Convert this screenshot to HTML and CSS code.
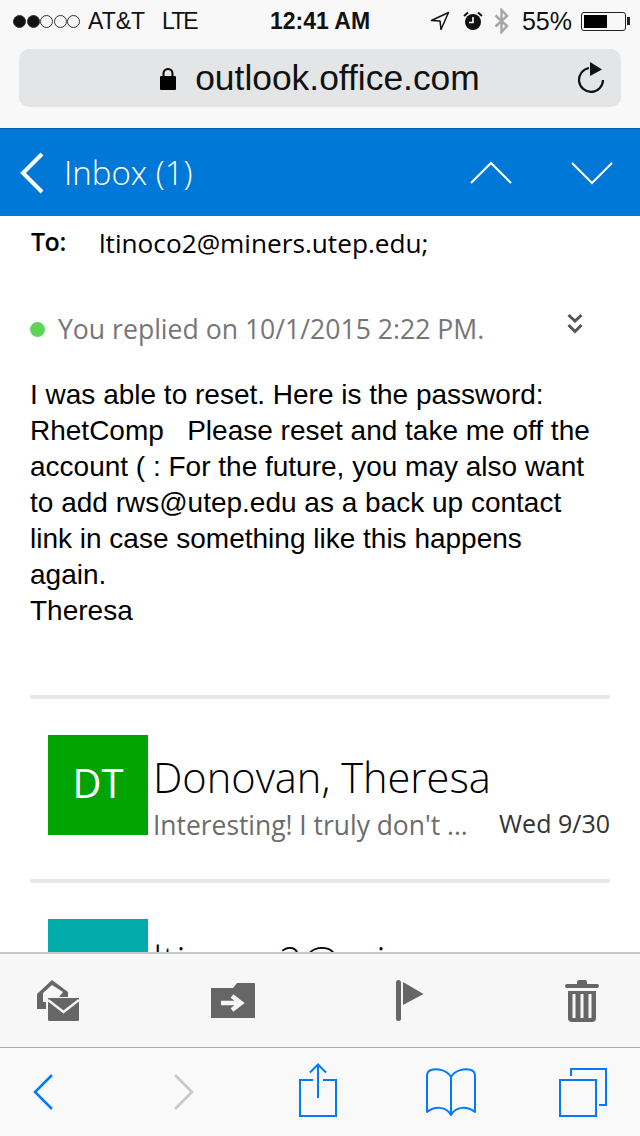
FILE: index.html
```html
<!DOCTYPE html>
<html lang="en">
<head>
    <meta charset="utf-8">
    <title>Inbox</title>
    <link rel="stylesheet" href="styles.css">
</head>
<body>
    <div class="phone">
        <!-- safari chrome -->
        <div class="top-bar">
            <div class="status">
                <div class="status-left">
                    <span class="signal">
                        <i class="dot on"></i><i class="dot on"></i><i class="dot"></i><i class="dot"></i><i class="dot"></i>
                    </span>
                    <span class="carrier">AT&amp;T</span>
                    <span class="network">LTE</span>
                </div>
                <div class="clock">12:41 AM</div>
                <div class="status-right">
                    <svg class="ic-loc" width="20" height="20" viewBox="0 0 20 20"><path d="M1.5 9.5 L18.5 1.5 L11 18.5 L10 10 Z" fill="none" stroke="#111" stroke-width="1.5" stroke-linejoin="round"/></svg>
                    <svg class="ic-alarm" width="20" height="20" viewBox="0 0 20 20"><circle cx="10" cy="11" r="8" fill="#111"/><path d="M10 6 V11.5 H6" fill="none" stroke="#fff" stroke-width="1.6"/><path d="M1 5 L5 1.5 M19 5 L15 1.5" stroke="#111" stroke-width="2"/></svg>
                    <svg class="ic-bt" width="15" height="26" viewBox="0 0 15 26"><path d="M1.500 7.500 L13 18 L7.500 24 V2 L13 8 L1.500 18.500" fill="none" stroke="#a6a6a6" stroke-width="2.400"/></svg>
                    <span class="percent">55%</span>
                    <span class="battery"><span class="battery-level"></span></span>
                    <span class="battery-tip"></span>
                </div>
            </div>
            <div class="url-bar">
                <svg class="ic-lock" width="16" height="23" viewBox="0 0 16 23"><path d="M3.5 10 V6.5 a4.5 4.5 0 0 1 9 0 V10" fill="none" stroke="#000" stroke-width="2"/><rect x="0" y="9" width="16" height="14" rx="1" fill="#000"/></svg>
                <span class="url">outlook.office.com</span>
                <svg class="ic-reload" width="28" height="31" viewBox="0 0 28 31"><path d="M12 6 A12 12 0 1 0 26 18" fill="none" stroke="#111" stroke-width="2.200"/><path d="M13 0 L25 7.500 L13 14 Z" fill="#111"/></svg>
            </div>
        </div>

        <!-- outlook header -->
        <div class="mail-header">
            <svg class="ic-back" width="26" height="42" viewBox="0 0 26 42"><path d="M23 2 L4 21 L23 40" fill="none" stroke="#fff" stroke-width="4"/></svg>
            <span class="inbox-title">Inbox (1)</span>
            <svg class="ic-up" width="42" height="24" viewBox="0 0 42 24"><path d="M1 22 L21 2 L41 22" fill="none" stroke="#fff" stroke-width="2"/></svg>
            <svg class="ic-down" width="42" height="24" viewBox="0 0 42 24"><path d="M1 2 L21 22 L41 2" fill="none" stroke="#fff" stroke-width="2"/></svg>
        </div>

        <div class="content">
            <div class="to-row">
                <span class="to-label">To:</span>
                <span class="to-addr">ltinoco2@miners.utep.edu;</span>
            </div>
            <div class="reply-row">
                <i class="green-dot"></i>
                <span class="reply-text">You replied on 10/1/2015 2:22 PM.</span>
                <svg class="ic-more" width="16" height="22" viewBox="0 0 16 22"><path d="M1.5 2 L8 8 L14.5 2 M1.5 12 L8 18.500 L14.5 12" fill="none" stroke="#555" stroke-width="3"/></svg>
            </div>
            <div class="message">I was able to reset. Here is the password:<br>RhetComp &nbsp; Please reset and take me off the<br>account ( : For the future, you may also want<br>to add rws@utep.edu as a back up contact<br>link in case something like this happens<br>again.<br>Theresa</div>

            <div class="thread">
                <div class="avatar green">DT</div>
                <div class="thread-main">
                    <div class="sender">Donovan, Theresa</div>
                    <div class="thread-sub">
                        <span class="preview">Interesting! I truly don't ...</span>
                        <span class="date">Wed 9/30</span>
                    </div>
                </div>
            </div>
            <div class="thread last">
                <div class="avatar teal"></div>
                <div class="thread-main">
                    <div class="sender">ltinoco2@miners</div>
                </div>
            </div>
        </div>

        <div class="mail-tools">
            <svg class="mt-read" width="42" height="42" viewBox="0 0 42 42"><path d="M0 14 L15 0 L31 12 V17 H22 L26 12 L15 5 L6 13 V22 H9 V29 H0 Z" fill="#666"/><path d="M11 18 H42 V39.500 a1.500 1.500 0 0 1 -1.500 1.500 H12.500 a1.500 1.500 0 0 1 -1.500 -1.500 Z" fill="#666"/><path d="M11 20 L26.500 32 L42 20" fill="none" stroke="#f7f7f7" stroke-width="2.500"/></svg>
            <svg class="mt-move" width="44" height="35" viewBox="0 0 44 35"><path d="M0 5 H22 L26 0 H43 a1 1 0 0 1 1 1 V35 H0 Z" fill="#666"/><path d="M10 20 H28 M21 13 L30 20 L21 27" fill="none" stroke="#f7f7f7" stroke-width="4.500"/></svg>
            <svg class="mt-flag" width="28" height="41" viewBox="0 0 28 41"><rect x="0" y="0" width="5" height="41" rx="2.500" fill="#666"/><path d="M7 2 L27.500 14 L7 25 Z" fill="#666"/></svg>
            <svg class="mt-trash" width="34" height="44" viewBox="0 0 34 44"><path d="M12 3 a2 2 0 0 1 2 -2 h6 a2 2 0 0 1 2 2 V5 H32 a2 2 0 0 1 0 4 H2 a2 2 0 0 1 0 -4 H12 Z" fill="#666"/><path d="M3 12 H31 V39 a4 4 0 0 1 -4 4 H7 a4 4 0 0 1 -4 -4 Z" fill="#666"/><path d="M9 15 V39 M17 15 V39 M25 15 V39" stroke="#f7f7f7" stroke-width="3"/></svg>
        </div>

        <div class="browser-tools">
            <svg class="bt-back" width="22" height="38" viewBox="0 0 22 38"><path d="M20 2 L3 19 L20 36" fill="none" stroke="#007aff" stroke-width="2.500"/></svg>
            <svg class="bt-fwd" width="22" height="38" viewBox="0 0 22 38"><path d="M2 2 L19 19 L2 36" fill="none" stroke="#c7c7c7" stroke-width="2.500"/></svg>
            <svg class="bt-share" width="40" height="54" viewBox="0 0 40 54"><path d="M15 17 H2 V53 H38 V17 H25" fill="none" stroke="#007aff" stroke-width="2"/><path d="M20 35 V2 M12 9.500 L20 1.500 L28 9.500" fill="none" stroke="#007aff" stroke-width="2"/></svg>
            <svg class="bt-book" width="52" height="50" viewBox="0 0 52 50"><path d="M26 10 C22 3 12 1 6 3 C3 4 2 6 2 9 V45 C10 39 21 39 26 48 C31 39 42 39 50 45 V9 C50 6 49 4 46 3 C40 1 30 3 26 10 V48" fill="none" stroke="#007aff" stroke-width="2" stroke-linejoin="round"/></svg>
            <svg class="bt-tabs" width="50" height="50" viewBox="0 0 50 50"><rect x="2" y="13" width="36" height="36" fill="none" stroke="#007aff" stroke-width="2"/><path d="M13 9 V2 H48 V38 H41" fill="none" stroke="#007aff" stroke-width="2"/></svg>
        </div>
    </div>
</body>
</html>
```

FILE: styles.css
```css
html,
body {
    margin: 0;
    padding: 0;
    background: #fff;
}

.phone {
    width: 640px;
    height: 1136px;
    overflow: hidden;
    display: flex;
    flex-direction: column;
    font-family: "Liberation Sans", Arial, sans-serif;
    color: #000;
}

/* safari chrome */
.top-bar {
    height: 129px;
    flex: none;
    background: #f8f8f8;
    border-bottom: 1px solid #0a5ca8;
    box-sizing: border-box;
    padding: 0 19px;
}

.status {
    height: 49px;
    display: flex;
    align-items: center;
    justify-content: space-between;
    margin: 0 -9px 0 -6px;
    padding-bottom: 7px;
    box-sizing: border-box;
    font-size: 24px;
    color: #111;
}

.status-left,
.status-right {
    display: flex;
    align-items: center;
    width: 235px;
}

.status-right {
    justify-content: flex-end;
}

.signal {
    display: flex;
    gap: 0.500px;
    margin-right: 8px;
}

.dot {
    width: 13px;
    height: 13px;
    border: 1px solid #333;
    border-radius: 50%;
    box-sizing: border-box;
}

.dot.on {
    background: #111;
}

.carrier {
    font-size: 23px;
}

.network {
    margin-left: 17px;
    font-size: 23px;
    letter-spacing: -2px;
}

.clock {
    font-weight: 700;
    font-size: 23px;
    margin-right: 3px;
}

.ic-loc {
    margin-right: 13px;
}

.ic-alarm {
    margin-right: 11px;
}

.ic-bt {
    margin-right: 13px;
}

.percent {
    font-size: 25px;
    margin-right: 9px;
}

.battery {
    width: 45px;
    height: 19px;
    border: 1px solid #222;
    border-radius: 3px;
    box-sizing: border-box;
    padding: 2px;
    display: block;
}

.battery-level {
    display: block;
    width: 23px;
    height: 100%;
    background: #000;
}

.battery-tip {
    width: 3px;
    height: 8px;
    background: #222;
    margin-left: 1px;
}

.url-bar {
    height: 58px;
    background: #e4e5e7;
    border-radius: 10px;
    display: flex;
    align-items: center;
    justify-content: center;
    position: relative;
    font-size: 35.400px;
    color: #111;
}

.ic-lock {
    margin-right: 19px;
}

.ic-reload {
    position: absolute;
    right: 16px;
    top: 13px;
}

/* outlook header */
.mail-header {
    height: 87px;
    flex: none;
    background: #0078d7;
    display: flex;
    align-items: center;
    padding: 0 27px 0 19px;
    color: #fff;
}

.inbox-title {
    font-family: "Open Sans", sans-serif;
    font-size: 33px;
    font-weight: 300;
    margin-left: 19px;
    flex: 1;
}

.ic-up {
    margin-right: 59px;
}

/* message */
.content {
    flex: 1;
    min-height: 0;
    overflow: hidden;
    background: #fff;
    padding: 0 30px;
}

.to-row {
    display: flex;
    align-items: flex-start;
    padding-top: 8px;
    height: 48px;
    font-family: "Open Sans", sans-serif;
    font-size: 26.200px;
    line-height: 38px;
}

.to-label {
    width: 69px;
    padding-left: 1px;
    box-sizing: border-box;
    font-size: 25px;
    letter-spacing: -0.500px;
    font-weight: 600;
    line-height: 34px;
}

.reply-row {
    display: flex;
    align-items: center;
    margin-top: 37px;
    height: 40px;
    font-family: "Open Sans", sans-serif;
    font-size: 26.600px;
    color: #767676;
}

.green-dot {
    width: 15px;
    height: 15px;
    border-radius: 50%;
    background: #5ed558;
    margin-right: 13px;
}

.reply-text {
    flex: 1;
}

.ic-more {
    margin: 0 27px 10px 0;
}

.message {
    margin-top: 28px;
    font-size: 28px;
    line-height: 36px;
    color: #000;
}

.thread {
    margin-top: 66px;
    border-top: 4px solid #e8e8e8;
    padding: 36px 0 44px 18px;
    display: flex;
    font-family: "Open Sans", sans-serif;
}

.thread.last {
    margin-top: 0;
}

.avatar {
    width: 100px;
    height: 100px;
    flex: none;
    box-sizing: border-box;
    padding-bottom: 5px;
    display: flex;
    align-items: center;
    justify-content: center;
    color: #fff;
    font-size: 40px;
    font-weight: 400;
}

.avatar.green {
    background: #00a300;
}

.avatar.teal {
    background: #00aba9;
}

.thread-main {
    flex: 1;
    min-width: 0;
    height: 100px;
    padding-left: 5px;
}

.sender {
    font-size: 41.600px;
    font-weight: 300;
    line-height: 44px;
    margin-top: 20px;
    white-space: nowrap;
}

.thread-sub {
    display: flex;
    justify-content: space-between;
    align-items: flex-start;
    margin-top: 8px;
}

.preview {
    color: #6c6c6c;
    font-size: 26.400px;
    line-height: 36px;
}

.date {
    color: #333;
    font-size: 25px;
    line-height: 32px;
}

/* bottom bars */
.mail-tools {
    height: 96px;
    flex: none;
    box-sizing: border-box;
    border-top: 2px solid #c8c8c8;
    border-bottom: 1px solid #ababab;
    background: #f7f7f7;
    display: flex;
    align-items: center;
    padding-left: 37px;
}

.mt-move {
    margin-left: 132px;
}

.mt-flag {
    margin-left: 141px;
}

.mt-trash {
    margin-left: 141px;
}

.browser-tools {
    height: 88px;
    flex: none;
    box-sizing: border-box;
    background: #f9f9f9;
    display: flex;
    align-items: center;
    padding-left: 32px;
}

.bt-fwd {
    margin-left: 119px;
}

.bt-share {
    margin-left: 103px;
    margin-bottom: 5px;
}

.bt-book {
    margin-left: 87px;
}

.bt-tabs {
    margin-left: 81px;
}
```
